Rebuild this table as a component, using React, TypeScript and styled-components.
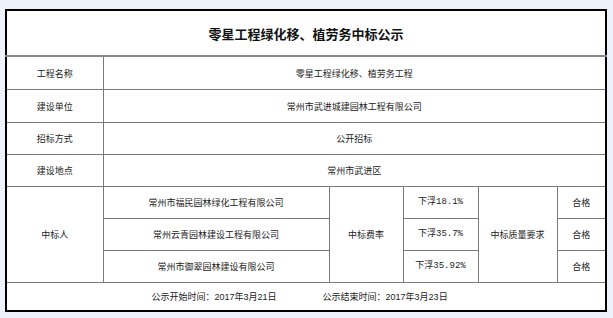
import React from "react";
import styled, { createGlobalStyle } from "styled-components";

const Global = createGlobalStyle`
  html, body { margin: 0; padding: 0; background: #eef2fa; }
  body { font-family: "Noto Sans CJK SC", "Liberation Sans", sans-serif; }
`;

const Page = styled.div`
  padding: 9px 0 0 5px;
  width: 613px;
  height: 318px;
  box-sizing: border-box;
`;

const Table = styled.table`
  width: 600px;
  border-collapse: collapse;
  table-layout: fixed;
  background: #fff;
  border: 2px solid #000;
  color: #222;
  font-size: 9px;
`;

const Cell = styled.td<{ $h?: number; $mono?: boolean }>`
  border: 1px solid #7a7a7a;
  text-align: center;
  vertical-align: middle;
  padding: 0;
  height: ${(p) => (p.$h ? `${p.$h}px` : "auto")};
  font-family: ${(p) =>
    p.$mono
      ? `"Liberation Mono", "Noto Sans CJK SC", monospace`
      : `"Noto Sans CJK SC", "Liberation Sans", sans-serif`};
  line-height: 1;
`;

const TitleCell = styled.td`
  height: 44px;
  border-bottom: 2px solid #8a8a8a;
  text-align: center;
  font-size: 13px;
  font-weight: bold;
  color: #111;
  padding: 0;
`;

const FooterCell = styled.td`
  height: 27px;
  border-top: 1px solid #7a7a7a;
  padding: 0;
`;

const FooterRow = styled.div`
  display: flex;
  justify-content: center;
  gap: 46px;
  padding-right: 13px;
  font-family: "Noto Sans CJK SC", "Liberation Sans", sans-serif;
  font-size: 9px;
  line-height: 1;
`;

const Num = styled.span`
  font-family: "Liberation Sans", "Noto Sans CJK SC", sans-serif;
`;

const info: [string, string, number][] = [
  ["工程名称", "零星工程绿化移、植劳务工程", 32],
  ["建设单位", "常州市武进城建园林工程有限公司", 32],
  ["招标方式", "公开招标", 31],
  ["建设地点", "常州市武进区", 31],
];

const bidders = [
  ["常州市福民园林绿化工程有限公司", "下浮18.1%", "合格"],
  ["常州云青园林建设工程有限公司", "下浮35.7%", "合格"],
  ["常州市御翠园林建设有限公司", "下浮35.92%", "合格"],
];

export default function App() {
  return (
    <>
      <Global />
      <Page>
        <Table>
          <colgroup>
            <col style={{ width: 97 }} />
            <col style={{ width: 226 }} />
            <col style={{ width: 74 }} />
            <col style={{ width: 75 }} />
            <col style={{ width: 79 }} />
            <col style={{ width: 49 }} />
          </colgroup>
          <tbody>
            <tr>
              <TitleCell colSpan={6}>零星工程绿化移、植劳务中标公示</TitleCell>
            </tr>
            {info.map(([k, v, h]) => (
              <tr key={k}>
                <Cell $h={h}>{k}</Cell>
                <Cell colSpan={5}>{v}</Cell>
              </tr>
            ))}
            {bidders.map(([name, rate, q], i) => (
              <tr key={name}>
                {i === 0 && <Cell rowSpan={3}>中标人</Cell>}
                <Cell $h={31}>{name}</Cell>
                {i === 0 && <Cell rowSpan={3}>中标费率</Cell>}
                <Cell $mono>{rate}</Cell>
                {i === 0 && <Cell rowSpan={3}>中标质量要求</Cell>}
                <Cell>{q}</Cell>
              </tr>
            ))}
            <tr>
              <FooterCell colSpan={6}>
                <FooterRow>
                  <span>
                    公示开始时间：<Num>2017</Num>年<Num>3</Num>月<Num>21</Num>日
                  </span>
                  <span>
                    公示结束时间：<Num>2017</Num>年<Num>3</Num>月<Num>23</Num>日
                  </span>
                </FooterRow>
              </FooterCell>
            </tr>
          </tbody>
        </Table>
      </Page>
    </>
  );
}
